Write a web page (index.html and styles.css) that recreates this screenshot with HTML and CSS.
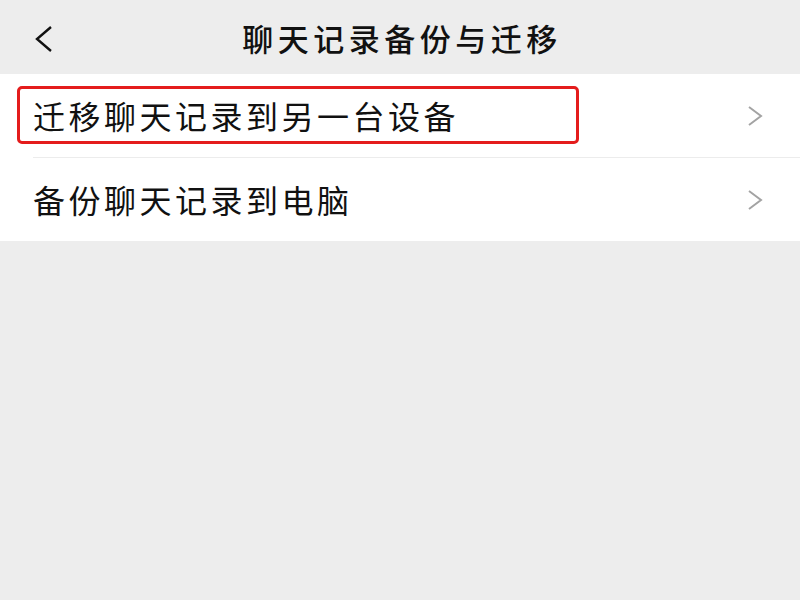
FILE: index.html
```html
<!DOCTYPE html>
<html lang="zh-CN">
<head>
  <meta charset="UTF-8" />
  <title>聊天记录备份与迁移</title>
  <link rel="stylesheet" href="styles.css">
</head>
<body>

  <div class="top-bar">
    <span class="back-btn">
      <svg width="22" height="28" viewBox="0 0 22 28">
        <polyline points="18,2 4,14 18,26" fill="none" stroke="#111" stroke-width="2.4" />
      </svg>
    </span>
    <h1 class="title">聊天记录备份与迁移</h1>
  </div>

  <div class="menu-list">
    <div class="menu-item">
      <span class="item-label">迁移聊天记录到另一台设备</span>
      <svg class="arrow" width="18" height="22" viewBox="0 0 18 22">
        <polyline points="3,2 15,11 3,20" fill="none" stroke="#a3a3a3" stroke-width="2" />
      </svg>
      <div class="highlight-box"></div>
    </div>
    <div class="menu-item">
      <span class="item-label">备份聊天记录到电脑</span>
      <svg class="arrow" width="18" height="22" viewBox="0 0 18 22">
        <polyline points="3,2 15,11 3,20" fill="none" stroke="#a3a3a3" stroke-width="2" />
      </svg>
    </div>
  </div>

</body>
</html>
```

FILE: styles.css
```css
* {
  margin: 0;
  padding: 0;
  box-sizing: border-box;
}

html, body {
  width: 800px;
  height: 600px;
  overflow: hidden;
  background: #ededed;
  font-family: "Noto Sans CJK SC", "Noto Sans", sans-serif;
  color: #111;
}

.top-bar {
  position: relative;
  height: 74px;
  display: flex;
  align-items: center;
  justify-content: center;
}

.back-btn {
  position: absolute;
  left: 33px;
  top: 25px;
  display: flex;
}

.title {
  font-size: 31px;
  font-weight: 500;
  letter-spacing: 4.5px;
  margin-left: 4px;
  line-height: 1;
}

.menu-list {
  background: #fff;
}

.menu-item {
  position: relative;
  height: 84px;
  margin-left: 33px;
  padding-right: 36px;
  display: flex;
  align-items: center;
  justify-content: space-between;
}

.menu-item + .menu-item {
  border-top: 1px solid #ececec;
}

.menu-item:first-child {
  height: 83px;
}

.item-label {
  font-size: 32px;
  letter-spacing: 3.5px;
  line-height: 1;
  margin-top: -2px;
}

.highlight-box {
  position: absolute;
  left: -16px;
  top: 12px;
  width: 562px;
  height: 58px;
  border: 3px solid #e41c1c;
  border-radius: 5px;
}
```
